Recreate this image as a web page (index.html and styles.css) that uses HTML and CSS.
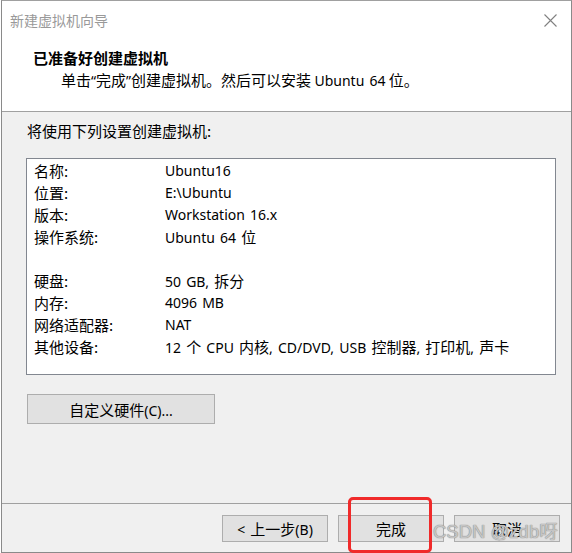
FILE: index.html
```html
<!DOCTYPE html>
<html lang="zh-CN">
<head>
<meta charset="utf-8">
<title>新建虚拟机向导</title>
<link rel="stylesheet" href="styles.css">
</head>
<body>
<div class="window">
  <div class="header">
    <div class="titlebar">
      <span class="title">新建虚拟机向导</span>
      <svg class="close" width="13" height="13" viewBox="0 0 13 13"><path d="M0.5 0.5 L12.5 12.5 M12.5 0.5 L0.5 12.5" stroke="#808080" stroke-width="1.1" fill="none"/></svg>
    </div>
    <div class="heading">已准备好创建虚拟机</div>
    <div class="subtext">单击<span class="en">“</span>完成<span class="en">”</span>创建虚拟机。然后可以安装 <span class="en">Ubuntu 64</span> 位。</div>
  </div>
  <div class="body">
    <div class="intro">将使用下列设置创建虚拟机:</div>
    <div class="list">
      <div class="row"><span class="label">名称:</span><span class="value en">Ubuntu16</span></div>
      <div class="row"><span class="label">位置:</span><span class="value en">E:\Ubuntu</span></div>
      <div class="row"><span class="label">版本:</span><span class="value en">Workstation 16.x</span></div>
      <div class="row"><span class="label">操作系统:</span><span class="value"><span class="en">Ubuntu 64 </span>位</span></div>
      <div class="row"></div>
      <div class="row"><span class="label">硬盘:</span><span class="value"><span class="en">50 GB, </span>拆分</span></div>
      <div class="row"><span class="label">内存:</span><span class="value en">4096 MB</span></div>
      <div class="row"><span class="label">网络适配器:</span><span class="value en">NAT</span></div>
      <div class="row"><span class="label">其他设备:</span><span class="value"><span class="en">12 </span>个<span class="en"> CPU </span>内核<span class="en">, CD/DVD, USB </span>控制器<span class="en">, </span>打印机<span class="en">, </span>声卡</span></div>
    </div>
    <div class="btn custom"><span>自定义硬件<span class="en">(C)...</span></span></div>
  </div>
  <div class="footer">
    <div class="btn"><span><span class="en">&lt; </span>上一步<span class="en">(B)</span></span></div>
    <div class="btn"><span>完成</span></div>
    <div class="btn"><span>取消</span></div>
  </div>
  <div class="highlight"></div>
  <div class="watermark">CSDN @zdb呀</div>
</div>
</body>
</html>
```
FILE: styles.css
```css
html, body {
  margin: 0;
  padding: 0;
  background: #ffffff;
}
body {
  font-family: "Noto Sans CJK SC", sans-serif;
  font-size: 15px;
  color: #000;
}
.en {
  font-family: "Noto Sans", "Noto Sans CJK SC", sans-serif;
  font-size: 14px;
  word-spacing: 1.5px;
}
.window {
  position: relative;
  box-sizing: border-box;
  margin-left: 1px;
  width: 571px;
  height: 553px;
  border: 1px solid #8a8a8a;
  border-top-color: #a0a0a0;
  background: #f0f0f0;
  display: flex;
  flex-direction: column;
}
.header {
  background: #fff;
  height: 110px;
  border-bottom: 1px solid #a0a0a0;
  box-sizing: content-box;
}
.titlebar {
  display: flex;
  justify-content: space-between;
  align-items: center;
  height: 20px;
  margin-top: 9px;
  padding: 0 14px 0 8px;
}
.title {
  color: #999;
  font-size: 14px;
  line-height: 20px;
}
.close {
  display: block;
  margin-top: 1px;
}
.heading {
  margin-top: 18px;
  margin-left: 31px;
  font-weight: bold;
  font-size: 15px;
  line-height: 20px;
}
.subtext {
  margin-left: 59px;
  margin-top: 2px;
  line-height: 20px;
}
.body {
  flex: 1;
  padding: 8px 0 0 24px;
  border-bottom: 1px solid #a0a0a0;
}
.intro {
  line-height: 22px;
  margin-left: 1px;
}
.list {
  margin-top: 16px;
  box-sizing: border-box;
  width: 530px;
  height: 217px;
  background: #fff;
  border: 1px solid #828790;
  padding: 1px 0 0 7px;
}
.row {
  display: flex;
  height: 22px;
  line-height: 22px;
}
.label {
  width: 131px;
  flex: none;
}
.btn {
  box-sizing: border-box;
  width: 106px;
  height: 27px;
  background: #e1e1e1;
  border: 1px solid #adadad;
  display: flex;
  align-items: center;
  justify-content: center;
}
.custom {
  margin-top: 19px;
  margin-left: 1px;
  width: 188px;
  height: 30px;
}
.footer {
  height: 48px;
  display: flex;
  justify-content: flex-end;
  gap: 10px;
  padding: 11px 11px 0 0;
  box-sizing: border-box;
}
.highlight {
  position: absolute;
  left: 346px;
  top: 496px;
  width: 84px;
  height: 56px;
  box-sizing: border-box;
  border: 3px solid #f02a2a;
  border-radius: 5px;
}
.watermark {
  position: absolute;
  left: 431px;
  top: 519px;
  font-family: "Liberation Sans", "Noto Sans CJK SC", sans-serif;
  font-size: 18.5px;
  line-height: 24px;
  color: rgba(205, 205, 205, 0.9);
  text-shadow: 0 0 1px #8c8c8c, 0 0 1px #8c8c8c;
}
```
